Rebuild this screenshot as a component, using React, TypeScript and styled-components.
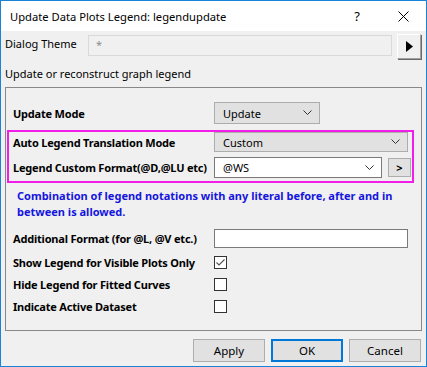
import styled, { createGlobalStyle } from "styled-components";

const GlobalStyle = createGlobalStyle`
  html, body {
    margin: 0;
    padding: 0;
    background: #ffffff;
  }
  body {
    font-family: "Noto Sans", "Open Sans", sans-serif;
    font-size: 11px;
    color: #000000;
  }
`;

const Window = styled.div`
  box-sizing: border-box;
  width: 427px;
  height: 367px;
  border: 1px solid #1883d7;
  background: #f0f0f0;
  display: flex;
  flex-direction: column;
  overflow: hidden;
`;

const TitleBar = styled.div`
  height: 30px;
  background: #ffffff;
  display: flex;
  align-items: center;
  padding-left: 9px;
`;

const Title = styled.div`
  flex: 1;
  font-size: 11.2px;
`;

const TitleButton = styled.div<{ $w: number }>`
  width: ${(p) => p.$w}px;
  height: 30px;
  display: flex;
  align-items: center;
  justify-content: center;
  font-size: 13px;
`;

const Body = styled.div`
  flex: 1;
  display: flex;
  flex-direction: column;
  padding: 0 4px;
`;

const ThemeRow = styled.div`
  margin-top: 3px;
  height: 25px;
  display: flex;
  align-items: center;
`;

const ThemeLabel = styled.div`
  width: 83px;
  margin-top: -7px;
`;

const ThemeInput = styled.div`
  box-sizing: border-box;
  width: 304px;
  height: 21px;
  border: 1px solid #d9d9d9;
  margin-top: -3px;
  padding: 1px 7px;
  color: #8c8c8c;
`;

const ArrowButton = styled.div`
  box-sizing: border-box;
  margin-left: 5px;
  width: 24px;
  height: 25px;
  background: #f0f0f0;
  border-top: 1px solid #ffffff;
  border-left: 1px solid #ffffff;
  border-right: 1px solid #a0a0a0;
  border-bottom: 1px solid #a0a0a0;
  box-shadow: 1px 1px 0 #696969;
  display: flex;
  align-items: center;
  justify-content: center;
`;

const Caption = styled.div`
  height: 28px;
  display: flex;
  align-items: center;
`;

const GroupBox = styled.div`
  box-sizing: border-box;
  width: 417px;
  border: 1px solid #888888;
  padding: 14px 0 13px;
  display: flex;
  flex-direction: column;
`;

const Row = styled.div<{ $h: number; $inset?: number; $top?: number }>`
  display: grid;
  grid-template-columns: 201px 1fr;
  align-items: center;
  height: ${(p) => p.$h}px;
  margin-top: ${(p) => p.$top ?? 0}px;
  padding-left: ${(p) => p.$inset ?? 7}px;
`;

const Label = styled.div`
  font-weight: 700;
  letter-spacing: -0.2px;
  white-space: nowrap;
`;

const Highlight = styled.div`
  margin: 6px 7px 0 1px;
  border: 2px solid #f01ee8;
  padding-bottom: 3px;
`;

const Select = styled.div<{ $w: number; $white?: boolean }>`
  box-sizing: border-box;
  width: ${(p) => p.$w}px;
  height: 100%;
  border: 1px solid ${(p) => (p.$white ? "#7a7a7a" : "#adadad")};
  background: ${(p) => (p.$white ? "#ffffff" : "#e1e1e1")};
  display: flex;
  align-items: center;
  justify-content: space-between;
  padding: 0 7px 0 8px;
`;

const ComboWrap = styled.div`
  display: flex;
  align-items: center;
  gap: 6px;
  height: 100%;
`;

const SmallButton = styled.div`
  box-sizing: border-box;
  width: 23px;
  height: 19px;
  border: 1px solid #adadad;
  background: #e1e1e1;
  display: flex;
  align-items: center;
  justify-content: center;
  font-weight: 700;
`;

const Note = styled.div`
  margin-top: 5px;
  padding-left: 11px;
  line-height: 16px;
  color: #1515e0;
  font-weight: 700;
  white-space: nowrap;
`;

const TextInput = styled.div`
  box-sizing: border-box;
  width: 194px;
  height: 100%;
  border: 1px solid #7a7a7a;
  background: #ffffff;
`;

const Check = styled.div`
  box-sizing: border-box;
  width: 13px;
  height: 13px;
  border: 1px solid #333333;
  background: #ffffff;
  display: flex;
  align-items: center;
  justify-content: center;
`;

const Footer = styled.div`
  display: flex;
  justify-content: flex-end;
  gap: 6px;
  margin-top: 8px;
  padding-right: 1px;
`;

const Button = styled.div<{ $default?: boolean }>`
  box-sizing: border-box;
  width: 72px;
  height: 23px;
  background: #e1e1e1;
  border: ${(p) => (p.$default ? "2px solid #0078d7" : "1px solid #adadad")};
  display: flex;
  align-items: center;
  justify-content: center;
  font-size: 11.5px;
`;

const Chevron = () => (
  <svg width="9" height="6" viewBox="0 0 9 6">
    <path d="M0.5 0.5 L4.5 4.5 L8.5 0.5" fill="none" stroke="#333" strokeWidth="1" />
  </svg>
);

const CheckMark = () => (
  <svg width="11" height="11" viewBox="0 0 11 11">
    <path d="M1.5 5.5 L4 8 L9.5 2.5" fill="none" stroke="#555" strokeWidth="1.2" />
  </svg>
);

const CloseIcon = () => (
  <svg width="11" height="11" viewBox="0 0 11 11">
    <path d="M0.5 0.5 L10.5 10.5 M10.5 0.5 L0.5 10.5" stroke="#000" strokeWidth="1" />
  </svg>
);

const checkRows = [
  { label: "Show Legend for Visible Plots Only", checked: true },
  { label: "Hide Legend for Fitted Curves", checked: false },
  { label: "Indicate Active Dataset", checked: false },
];

export default function App() {
  return (
    <>
      <GlobalStyle />
      <Window>
        <TitleBar>
          <Title>Update Data Plots Legend: legendupdate</Title>
          <TitleButton $w={46}>?</TitleButton>
          <TitleButton $w={46}>
            <CloseIcon />
          </TitleButton>
        </TitleBar>
        <Body>
          <ThemeRow>
            <ThemeLabel>Dialog Theme</ThemeLabel>
            <ThemeInput>*</ThemeInput>
            <ArrowButton>
              <svg width="7" height="11" viewBox="0 0 7 11">
                <path d="M0 0 L7 5.5 L0 11 Z" fill="#000" />
              </svg>
            </ArrowButton>
          </ThemeRow>
          <Caption>Update or reconstruct graph legend</Caption>
          <GroupBox>
            <Row $h={22}>
              <Label>Update Mode</Label>
              <Select $w={106}>
                <span>Update</span>
                <Chevron />
              </Select>
            </Row>
            <Highlight>
              <Row $h={20} $inset={4}>
                <Label>Auto Legend Translation Mode</Label>
                <Select $w={194}>
                  <span>Custom</span>
                  <Chevron />
                </Select>
              </Row>
              <Row $h={21} $inset={4} $top={5}>
                <Label>Legend Custom Format(@D,@LU etc)</Label>
                <ComboWrap>
                  <Select $w={168} $white>
                    <span>@WS</span>
                    <Chevron />
                  </Select>
                  <SmallButton>&gt;</SmallButton>
                </ComboWrap>
              </Row>
            </Highlight>
            <Note>
              Combination of legend notations with any literal before, after and in
              <br />
              between is allowed.
            </Note>
            <Row $h={19} $top={9}>
              <Label>Additional Format (for @L, @V etc.)</Label>
              <TextInput />
            </Row>
            {checkRows.map((r, i) => (
              <Row key={r.label} $h={22} $top={i === 0 ? 3 : 0}>
                <Label>{r.label}</Label>
                <Check>{r.checked && <CheckMark />}</Check>
              </Row>
            ))}
          </GroupBox>
          <Footer>
            <Button>Apply</Button>
            <Button $default>OK</Button>
            <Button>Cancel</Button>
          </Footer>
        </Body>
      </Window>
    </>
  );
}
